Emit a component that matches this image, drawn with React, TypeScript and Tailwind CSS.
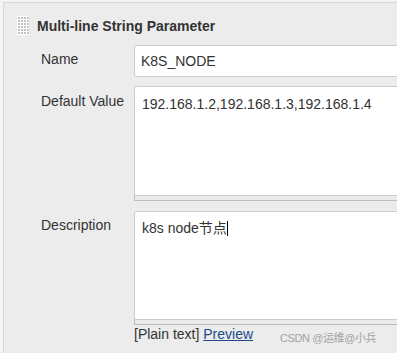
const Grip = () => (
  <svg width="12" height="19" viewBox="0 0 12 19" className="shrink-0">
    <rect width="12" height="19" fill="#ffffff" />
    {[1, 4, 7, 10].map((x) =>
      [1, 4, 7, 10, 13, 16].map((y) => (
        <rect key={`${x}-${y}`} x={x} y={y} width="2" height="2" fill="#c2c2c2" />
      ))
    )}
  </svg>
)

const Handle = () => <div className="h-[5px] border-l border-b border-[#bdbdbd] bg-[#ececec]" />

const App = () => {
  return (
    <div className="relative w-[397px] h-[353px] overflow-hidden bg-[#f3f3f3] font-['Liberation_Sans','Noto_Sans_CJK_SC',sans-serif] text-[14px] text-[#333]">
      <div className="mt-[2px] ml-[3px] h-full border-t border-l border-[#d7d7d7] bg-[#ececec]">
        <div className="flex items-center gap-2 pl-[13px] pt-[13px]">
          <Grip />
          <span className="font-bold leading-4">Multi-line String Parameter</span>
        </div>

        <div className="mt-[10px] pl-[37px] flex flex-col">
          <div className="flex">
            <div className="w-[93px] shrink-0 pt-[6px] leading-4">Name</div>
            <div className="w-[320px] shrink-0 h-[32px] border border-[#cccccc] rounded-[3px] bg-white flex items-center pl-[6px] leading-4">
              K8S_NODE
            </div>
          </div>

          <div className="flex mt-[9px]">
            <div className="w-[93px] shrink-0 pt-[7px] leading-4">Default Value</div>
            <div className="w-[320px] shrink-0">
              <div className="h-[110px] border border-[#cccccc] rounded-t-[3px] bg-white pl-[7px] pt-[9px] leading-4">
                192.168.1.2,192.168.1.3,192.168.1.4
              </div>
              <Handle />
            </div>
          </div>

          <div className="flex mt-[10px]">
            <div className="w-[93px] shrink-0 pt-[6px] leading-4">Description</div>
            <div className="w-[320px] shrink-0">
              <div className="h-[109px] border border-[#cccccc] rounded-t-[3px] bg-white pl-[7px] pt-[8px] leading-4 flex items-start">
                <span>k8s node节点</span>
                <span className="inline-block w-px h-[15px] bg-black mt-[1px]" />
              </div>
              <Handle />
              <div className="mt-[1px] leading-4">
                [Plain text] <span className="text-[#204a87] underline">Preview</span>
              </div>
            </div>
          </div>
        </div>
      </div>

      <div className="absolute left-[280px] top-[330px] text-[11px] tracking-[-0.4px] leading-4 text-[#a3a3a3]">
        CSDN @运维@小兵
      </div>
    </div>
  )
}

export default App
